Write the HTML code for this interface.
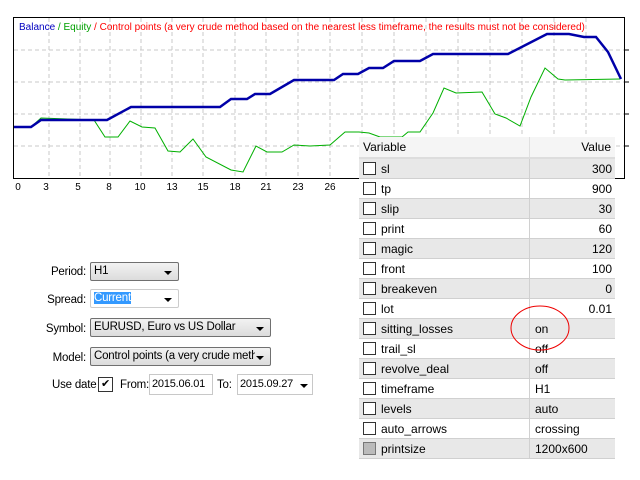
<!DOCTYPE html>
<html><head><style>
body{margin:0;width:640px;height:480px;background:#fff;font-family:"Liberation Sans",sans-serif;font-size:12px;position:relative;overflow:hidden}
.a{position:absolute}
.f{font-size:11.5px;letter-spacing:-0.2px}
.lbl{position:absolute;text-align:right;width:80px}
.cb{position:absolute;border:1px solid #707070;border-radius:2px;background:linear-gradient(#f2f2f2,#dcdcdc);height:19px;box-sizing:border-box;padding:2px 18px 2px 3px;white-space:nowrap;overflow:hidden}
.cb .ar{position:absolute;right:6px;top:8px;border-left:4px solid transparent;border-right:4px solid transparent;border-top:4px solid #000}
.ed{position:absolute;border:1px solid #c8c8c8;background:#fff;height:21px;box-sizing:border-box;padding:3px 2px}
table{position:absolute;left:359px;top:137px;border-collapse:collapse;width:256px;background:#fff}
td{height:19px;border-bottom:1px solid #d0d0d0;padding:0;font-size:12px}
td.v{border-left:1px solid #d0d0d0;padding:0 3px 0 5px}
tr.g td{background:#e8e8e8}
.ck{display:inline-block;width:11px;height:11px;border:1px solid #333;background:#fff;margin:0 5px 0 4px;vertical-align:-2px}
th{height:20px;font-weight:normal;background:#f5f5f5;border-bottom:2px solid #ddd;text-align:left;padding:0 4px}
</style></head><body>
<svg class="a" style="left:0;top:0" width="640" height="200">
<rect x="13.5" y="17.5" width="611" height="161" fill="#fff" stroke="#000"/>
<g stroke="#c8c8c8" stroke-dasharray="4,3">
<line x1="14" y1="50" x2="624" y2="50"/><line x1="14" y1="82" x2="624" y2="82"/><line x1="14" y1="114" x2="624" y2="114"/><line x1="14" y1="146" x2="624" y2="146"/>
<line x1="49" y1="18" x2="49" y2="178"/><line x1="80" y1="18" x2="80" y2="178"/><line x1="110" y1="18" x2="110" y2="178"/><line x1="141" y1="18" x2="141" y2="178"/><line x1="172" y1="18" x2="172" y2="178"/><line x1="203" y1="18" x2="203" y2="178"/><line x1="235" y1="18" x2="235" y2="178"/><line x1="266" y1="18" x2="266" y2="178"/><line x1="298" y1="18" x2="298" y2="178"/><line x1="330" y1="18" x2="330" y2="178"/><line x1="362" y1="18" x2="362" y2="178"/><line x1="394" y1="18" x2="394" y2="178"/><line x1="426" y1="18" x2="426" y2="178"/><line x1="458" y1="18" x2="458" y2="178"/><line x1="490" y1="18" x2="490" y2="178"/><line x1="522" y1="18" x2="522" y2="178"/><line x1="554" y1="18" x2="554" y2="178"/><line x1="586" y1="18" x2="586" y2="178"/>
</g>
<g stroke="#000"><line x1="625" y1="50" x2="629" y2="50"/><line x1="625" y1="82" x2="629" y2="82"/><line x1="625" y1="114" x2="629" y2="114"/><line x1="625" y1="146" x2="629" y2="146"/></g>
<polyline fill="none" stroke="#00b000" stroke-width="1" points="14,127 31,127 41,118 94,120 105,137 118,137 130,121 142,127 155,128 168,151 180,152 193,139 206,157 231,170 243,172 256,146 267,152 282,152 294,145 310,146 330,145 345,132 359,132 369,133 380,137 402,137 408,132 420,132 433,113 444,88 456,93 482,92 495,114 506,118 520,126 531,97 545,68 558,79 565,80 620,79"/>
<polyline fill="none" stroke="#0000a8" stroke-width="2.5" points="14,127 31,127 41,120 107,120 131,107 220,107 231,99 247,99 255,94 270,94 294,80 334,80 343,74 358,74 369,68 383,68 394,61 420,61 433,54 445,54 508,54 547,34 569,34 584,37 596,37 608,52 621,79"/>
<text x="19" y="30" font-size="10" font-family="Liberation Sans"><tspan fill="#0000c0">Balance</tspan><tspan fill="#00a000"> / Equity</tspan><tspan fill="#ff0000"> / Control points (a very crude method based on the nearest less timeframe, the results must not be considered)</tspan></text>
<g font-size="10" font-family="Liberation Sans" text-anchor="middle"><text x="18" y="190">0</text><text x="46" y="190">3</text><text x="78" y="190">5</text><text x="109" y="190">8</text><text x="140" y="190">10</text><text x="172" y="190">13</text><text x="203" y="190">15</text><text x="235" y="190">18</text><text x="266" y="190">21</text><text x="298" y="190">23</text><text x="330" y="190">26</text></g>
</svg>
<div class="f">
<div class="lbl" style="left:6px;top:266px">Period:</div>
<div class="cb" style="left:90px;top:262px;width:89px">H1<span class="ar"></span></div>
<div class="lbl" style="left:6px;top:294px">Spread:</div>
<div class="cb" style="left:90px;top:289px;width:89px;background:#fff;border-color:#ccc"><span style="background:#3399ff;color:#fff">Current</span><span class="ar"></span></div>
<div class="lbl" style="left:6px;top:323px">Symbol:</div>
<div class="cb" style="left:90px;top:318px;width:181px">EURUSD, Euro vs US Dollar<span class="ar"></span></div>
<div class="lbl" style="left:6px;top:352px">Model:</div>
<div class="cb" style="left:90px;top:347px;width:181px"><span style="display:inline-block;width:161px;overflow:hidden">Control points (a very crude metho</span><span class="ar"></span></div>
<div class="a" style="left:52px;top:379px">Use date</div>
<div class="a" style="left:98px;top:377px;width:13px;height:13px;border:1px solid #333;font-size:11px;line-height:13px;text-align:center">✔</div>
<div class="a" style="left:120px;top:379px">From:</div>
<div class="ed" style="left:149px;top:374px;width:64px;font-size:11px">2015.06.01</div>
<div class="a" style="left:217px;top:379px">To:</div>
<div class="ed" style="left:237px;top:374px;width:76px;font-size:11px">2015.09.27<span style="position:absolute;right:4px;top:9px;border-left:4px solid transparent;border-right:4px solid transparent;border-top:4px solid #000"></span></div>
</div>
<table>
<tr><th>Variable</th><th style="text-align:right;border-left:1px solid #e0e0e0">Value</th></tr>
<tr class="g"><td style="width:170px"><span class="ck"></span>sl</td><td class="v" align="right">300</td></tr>
<tr><td><span class="ck"></span>tp</td><td class="v" align="right">900</td></tr>
<tr class="g"><td><span class="ck"></span>slip</td><td class="v" align="right">30</td></tr>
<tr><td><span class="ck"></span>print</td><td class="v" align="right">60</td></tr>
<tr class="g"><td><span class="ck"></span>magic</td><td class="v" align="right">120</td></tr>
<tr><td><span class="ck"></span>front</td><td class="v" align="right">100</td></tr>
<tr class="g"><td><span class="ck"></span>breakeven</td><td class="v" align="right">0</td></tr>
<tr><td><span class="ck"></span>lot</td><td class="v" align="right">0.01</td></tr>
<tr class="g"><td><span class="ck"></span>sitting_losses</td><td class="v">on</td></tr>
<tr><td><span class="ck"></span>trail_sl</td><td class="v">off</td></tr>
<tr class="g"><td><span class="ck"></span>revolve_deal</td><td class="v">off</td></tr>
<tr><td><span class="ck"></span>timeframe</td><td class="v">H1</td></tr>
<tr class="g"><td><span class="ck"></span>levels</td><td class="v">auto</td></tr>
<tr><td><span class="ck"></span>auto_arrows</td><td class="v">crossing</td></tr>
<tr class="g"><td><span class="ck" style="background:#bbb;border-color:#777"></span>printsize</td><td class="v">1200x600</td></tr>
</table>
<svg class="a" style="left:500px;top:300px" width="80" height="60"><ellipse cx="40" cy="28" rx="29" ry="22" fill="none" stroke="#e00" stroke-width="1"/></svg>
</body></html>
